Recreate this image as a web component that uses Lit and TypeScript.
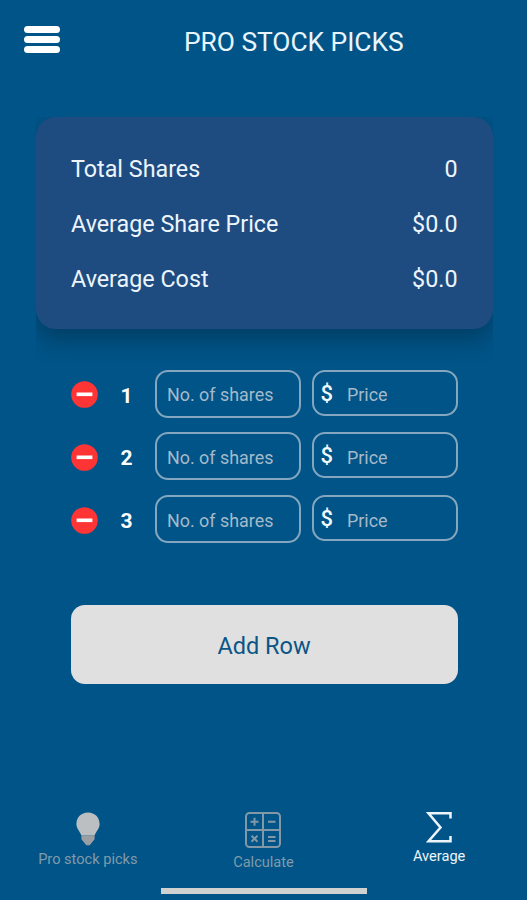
import { LitElement, html, css, svg } from "lit";
import { customElement, state } from "lit/decorators.js";

@customElement("stock-summary")
class StockSummary extends LitElement {
  static styles = css`
    :host { display: block; margin: 0 34.5px 0 36px; height: 246px; overflow: hidden; flex: none; }
    .card { height: 212px; box-sizing: border-box; border-radius: 20px; background: #1f4c80; padding: 24.5px 35px 0;
      box-shadow: 0 10px 24px rgba(0, 30, 45, 0.42); }
    .line { display: flex; justify-content: space-between; height: 55px; line-height: 55px; font-size: 23.3px; color: #edf5fc; }
  `;
  render() {
    return html`<div class="card">
      ${[["Total Shares", "0"], ["Average Share Price", "$0.0"], ["Average Cost", "$0.0"]].map(
        ([label, value]) => html`<div class="line"><span>${label}</span><span>${value}</span></div>`
      )}
    </div>`;
  }
}

@customElement("share-row")
class ShareRow extends LitElement {
  static properties = { number: { type: Number } };
  declare number: number;
  static styles = css`
    :host { display: flex; align-items: flex-start; height: 62.8px; }
    .remove { width: 27px; height: 27px; margin-top: 11.5px; display: block; }
    .number { width: 56px; margin-left: 1px; text-align: center; line-height: 53px; font-size: 21px; font-weight: 700; color: #fff; }
    .field { box-sizing: border-box; display: flex; align-items: center; height: 48px; width: 146px; border: 2px solid #84a7bf;
      border-radius: 13px; font-size: 17.9px; color: #a5bac9; padding: 2px 0 0 10.5px; white-space: nowrap; }
    .price { margin-left: 11px; height: 46px; padding: 4px 0 0 7px; }
    .dollar { font-size: 22px; font-weight: 500; color: #f2f8fc; width: 26.5px; line-height: 40px; margin-top: -2px; }
  `;
  render() {
    return html`
      <svg class="remove" viewBox="0 0 27 27"><circle cx="13.5" cy="13.5" r="13.3" fill="#ff3434" /><path d="M5.6 13.3h15.8" stroke="#fff" stroke-width="3.6" /></svg>
      <span class="number">${this.number}</span>
      <div class="field">No. of shares</div>
      <div class="field price"><span class="dollar">$</span>Price</div>
    `;
  }
}

const bulb = svg`
  <path d="M12 .5C5 .5 .4 5.6 .4 12c0 4.800 3.600 7.500 5 11.500h13.200c1.400-4 5-6.700 5-11.500C23.600 5.600 19 .5 12 .5z" fill="#bcbfc2"/>
  <path d="M5.400 23.500h13.200v3.800l-2.500 3-2.400 3h-3.400l-2.400-3-2.500-3z" fill="#9b9fa3"/>`;
const calculator = svg`
  <g fill="none" stroke="#8298a7" stroke-width="2">
    <rect x="1" y="1" width="34" height="34" rx="3.5"/><path d="M18 1v34M1 18h34"/>
    <path d="M5.500 9.700h8M9.500 5.700v8M23 9.700h7.500M6.500 23.700l6 6M12.500 23.700l-6 6M23 25h7.500M23 29h7.500"/>
  </g>`;
const sigma = svg`
  <path d="M24.500 6.500V1.300H2.500l12 14.200-12 13.800h22v-5.200" fill="none" stroke="#eef5fa" stroke-width="2.5"/>`;

@customElement("app-root")
class AppRoot extends LitElement {
  @state() rows = [1, 2, 3];

  static styles = css`
    :host { display: flex; flex-direction: column; height: 900px; width: 527px; background: #005488; font-family: Roboto, sans-serif; overflow: hidden; }
    header { display: flex; height: 117px; flex: none; }
    .menu { width: 36px; height: 27px; margin: 26px 0 0 23.5px; display: flex; flex-direction: column; justify-content: space-between; }
    .menu i { display: block; height: 7px; border-radius: 3.5px; background: #fff; }
    h1 { margin: 22px 0 0 124.5px; font-weight: 400; font-size: 26.4px; letter-spacing: -0.05px; line-height: 40px; color: #e9f5fd; white-space: nowrap; }
    .rows { margin: 6.7px 0 0 70.5px; height: 188.3px; }
    .add { margin: 47px 69.5px 0 70.5px; height: 79px; flex: none; border: 0; border-radius: 14px; background: #e0e0e0; color: #0b5587; font: 23.5px/80px Roboto, sans-serif; text-align: center; padding: 1px 0 0; }
    nav { display: grid; grid-template-columns: repeat(3, 175.67px); height: 76px; margin-top: 127px; }
    .tab { display: flex; flex-direction: column; align-items: center; color: #819baa; font-size: 14.6px; line-height: 18px; white-space: nowrap; }
    .tab svg { display: block; margin-top: 1px; }
    .active { color: #eef5fa; }
    .t0 span { margin-top: 4px; }
    .t1 span { margin-top: 5px; }
    .t2 span { margin-top: 4px; }
    .home { width: 206px; height: 6px; margin: 1px 0 0 161px; background: #d0d2d2; }
  `;

  render() {
    return html`
      <header>
        <div class="menu"><i></i><i></i><i></i></div>
        <h1>PRO STOCK PICKS</h1>
      </header>
      <stock-summary></stock-summary>
      <div class="rows">${this.rows.map((n) => html`<share-row .number=${n}></share-row>`)}</div>
      <button class="add" @click=${() => (this.rows = [...this.rows, this.rows.length + 1])}>Add Row</button>
      <nav>
        <div class="tab t0"><svg width="24" height="34" viewBox="0 0 24 34">${bulb}</svg><span>Pro stock picks</span></div>
        <div class="tab t1"><svg width="36" height="36" viewBox="0 0 36 36">${calculator}</svg><span>Calculate</span></div>
        <div class="tab t2 active"><svg width="26" height="31" viewBox="0 0 26 31">${sigma}</svg><span>Average</span></div>
      </nav>
      <div class="home"></div>
    `;
  }
}
